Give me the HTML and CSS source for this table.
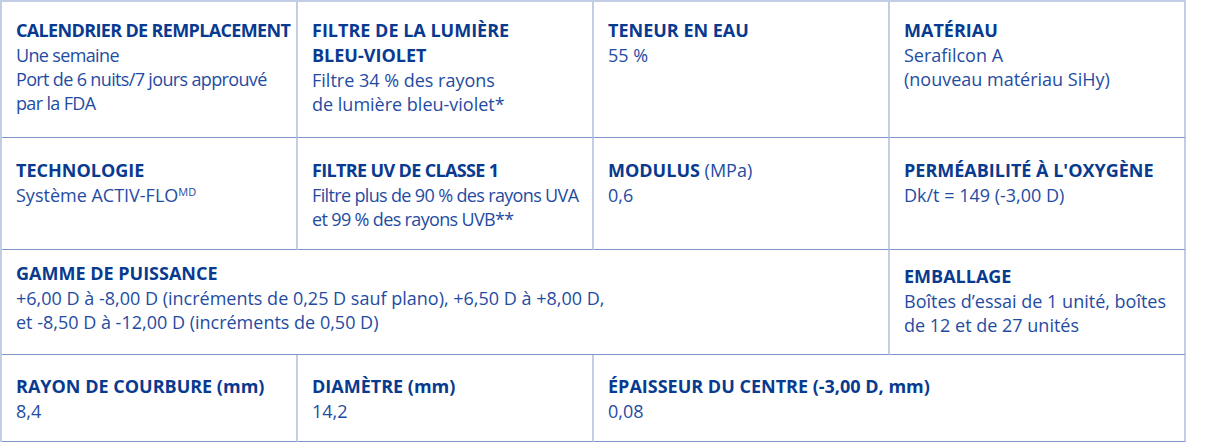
FILE: index.html
```html
<!DOCTYPE html>
<html lang="fr">
<head>
<meta charset="utf-8">
<title>Caractéristiques</title>
<link rel="stylesheet" href="styles.css">
</head>
<body>
<div class="specs">
  <div class="cell r1 tight">
    <div class="h">CALENDRIER DE REMPLACEMENT</div>
    <div class="t">Une semaine<br>Port de 6 nuits/7 jours approuvé<br>par la FDA</div>
  </div>
  <div class="cell r1">
    <div class="h">FILTRE DE LA LUMIÈRE<br>BLEU-VIOLET</div>
    <div class="t">Filtre 34 % des rayons<br>de lumière bleu-violet*</div>
  </div>
  <div class="cell r1">
    <div class="h">TENEUR EN EAU</div>
    <div class="t">55 %</div>
  </div>
  <div class="cell r1">
    <div class="h">MATÉRIAU</div>
    <div class="t">Serafilcon A<br>(nouveau matériau SiHy)</div>
  </div>

  <div class="cell r2">
    <div class="h">TECHNOLOGIE</div>
    <div class="t">Système ACTIV-FLO<sup class="sup">MD</sup></div>
  </div>
  <div class="cell r2 tight">
    <div class="h">FILTRE UV DE CLASSE 1</div>
    <div class="t">Filtre plus de 90 % des rayons UVA<br>et 99 % des rayons UVB**</div>
  </div>
  <div class="cell r2">
    <div class="h">MODULUS <span class="unit">(MPa)</span></div>
    <div class="t">0,6</div>
  </div>
  <div class="cell r2">
    <div class="h">PERMÉABILITÉ À L'OXYGÈNE</div>
    <div class="t">Dk/t = 149 (-3,00 D)</div>
  </div>

  <div class="cell r3 span3">
    <div class="h">GAMME DE PUISSANCE</div>
    <div class="t">+6,00 D à -8,00 D (incréments de 0,25 D sauf plano), +6,50 D à +8,00 D,<br>et -8,50 D à -12,00 D (incréments de 0,50 D)</div>
  </div>
  <div class="cell r3 shift">
    <div class="h">EMBALLAGE</div>
    <div class="t">Boîtes d’essai de 1 unité, boîtes<br>de 12 et de 27 unités</div>
  </div>

  <div class="cell r4">
    <div class="h">RAYON DE COURBURE (mm)</div>
    <div class="t">8,4</div>
  </div>
  <div class="cell r4">
    <div class="h">DIAMÈTRE (mm)</div>
    <div class="t">14,2</div>
  </div>
  <div class="cell r4 span2">
    <div class="h">ÉPAISSEUR DU CENTRE (-3,00 D, mm)</div>
    <div class="t">0,08</div>
  </div>
</div>
</body>
</html>
```

FILE: styles.css
```css
html, body {
  margin: 0;
  padding: 0;
  background: #ffffff;
}

body {
  font-family: "Open Sans", "Noto Sans", "Liberation Sans", sans-serif;
  font-size: 18px;
}

.specs {
  display: grid;
  grid-template-columns: repeat(4, 296px);
  width: 1186px;
  box-sizing: border-box;
  border-left: 2px solid #c3cde6;
  border-top: 2px solid #c3cde6;
}

.cell {
  box-sizing: border-box;
  display: flex;
  flex-direction: column;
  justify-content: flex-start;
  padding: 18px 2px 18px 14px;
  border-right: 2px solid #c3cde6;
  border-bottom: 1px solid #7f95c8;
}

.r1 { padding-top: 16px; padding-bottom: 21px; }
.r2 { padding-top: 20px; padding-bottom: 18px; }
.r3 { padding-top: 11px; padding-bottom: 20px; }
.r3.shift { padding-top: 14px; padding-bottom: 17px; }
.r4 { padding-top: 19px; padding-bottom: 18px; }

.span3 { grid-column: span 3; }
.span2 { grid-column: span 2; }

.h {
  font-weight: 700;
  font-size: 18px;
  line-height: 25px;
  color: #083a8f;
  white-space: nowrap;
}

.unit {
  font-weight: 400;
  color: #1f4ca2;
}

.t {
  font-weight: 400;
  font-size: 18px;
  line-height: 24px;
  color: #1f4ca2;
  white-space: nowrap;
}

.tight .h,
.tight .t {
  letter-spacing: -0.65px;
}

.sup {
  font-size: 11px;
  line-height: 0;
  vertical-align: 6px;
  letter-spacing: 0;
}
```
